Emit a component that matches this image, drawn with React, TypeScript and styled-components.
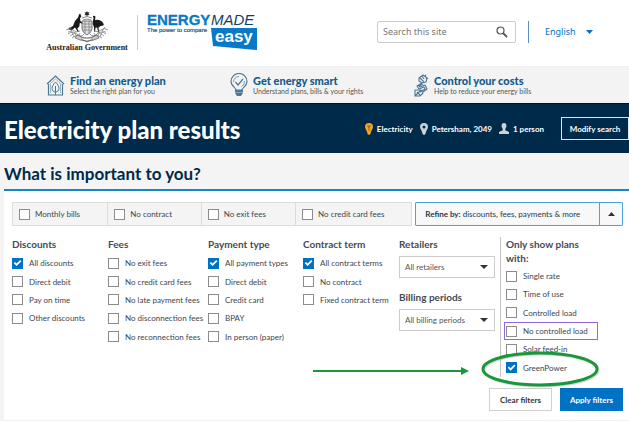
import React from "react";
import styled, { createGlobalStyle, css } from "styled-components";

const navy = "#002a4a";
const blue = "#0072c6";
const ink = "#3c4650";

const GlobalStyle = createGlobalStyle`
  * { box-sizing: border-box; }
  body {
    margin: 0;
    background: #fff;
    color: ${ink};
    font: 8px/12px Lato, "Open Sans", sans-serif;
  }
  h1, h2, h3, p, ul { margin: 0; padding: 0; }
  ul { list-style: none; }
  button, input, select { font: inherit; color: inherit; margin: 0; }
  svg { display: block; flex: none; }
`;

const Header = styled.header`
  display: flex;
  align-items: center;
  height: 67px;
  padding: 0 35px 2px 46px;
  border-bottom: 1px solid #f0f0f0;
`;

const Brands = styled.div`
  display: flex;
  align-items: center;
  gap: 9px;
  flex: 1;
`;

const Government = styled.div`
  width: 82px;
  display: flex;
  flex-direction: column;
  align-items: center;
  color: #222;
  font: bold 8px/10px "Liberation Serif", serif;
  white-space: nowrap;
`;

const Rule = styled.span<{ $blue?: boolean }>`
  width: 1px;
  height: ${(p) => (p.$blue ? 22 : 35)}px;
  background: ${(p) => (p.$blue ? "#5b92c4" : "#ccc")};
`;

const Tools = styled.div`
  display: flex;
  align-items: center;
  gap: 12px;
`;

const SearchBox = styled.form`
  display: flex;
  align-items: center;
  width: 139px;
  height: 22px;
  padding: 0 7px 0 5px;
  border: 1px solid #ccc;
  border-radius: 2px;
`;

const SearchInput = styled.input`
  flex: 1;
  min-width: 0;
  border: 0;
  padding: 0;
  outline: 0;
  background: none;
  font: 9px/14px "Noto Sans", sans-serif;
  &::placeholder { color: #777; opacity: 1; }
`;

const IconButton = styled.button`
  border: 0;
  padding: 0;
  background: none;
`;

const Picker = styled.div<{ $plain?: boolean }>`
  display: flex;
  align-items: center;
  position: relative;
  ${(p) =>
    p.$plain
      ? css`
          width: 49px;
          margin-left: 4px;
          color: ${blue};
          font: 9px/14px "Noto Sans", sans-serif;
        `
      : css`
          width: 96px;
          height: 22px;
          border: 1px solid #ccc;
          background: #fff;
          color: #555;
        `}
  select {
    appearance: none;
    width: 100%;
    height: 100%;
    border: 0;
    outline: 0;
    background: none;
    padding: 0 0 0 ${(p) => (p.$plain ? 0 : 5)}px;
  }
  svg {
    position: absolute;
    right: ${(p) => (p.$plain ? 1 : 6)}px;
    pointer-events: none;
  }
`;

const Nav = styled.nav`
  display: grid;
  grid-template-columns: 184fr 184fr 215fr;
  height: 36px;
  padding-left: 46px;
  background: #f3f3f3;
`;

const NavItem = styled.a`
  display: flex;
  align-items: center;
  gap: 5px;
  color: #555;
  font-size: 7px;
  line-height: 9px;
  text-decoration: none;
  white-space: nowrap;
  strong {
    display: block;
    color: #125a8c;
    font-size: 11px;
    font-weight: 900;
    line-height: 13px;
  }
`;

const Hero = styled.section`
  display: flex;
  align-items: center;
  justify-content: space-between;
  height: 50px;
  padding: 0 0 0 4px;
  border-top: 1px solid #001226;
  background: ${navy};
  color: #fff;
`;

const PageTitle = styled.h1`
  padding-top: 2px;
  font-size: 24px;
  line-height: 32px;
  font-weight: 900;
  white-space: nowrap;
`;

const Facts = styled.div`
  display: flex;
  align-items: center;
  gap: 7px;
  font-weight: 700;
  white-space: nowrap;
`;

const Fact = styled.span`
  display: flex;
  align-items: center;
  gap: 4px;
`;

const ModifyButton = styled.button`
  width: 68px;
  height: 23px;
  margin-left: 10px;
  padding: 0;
  border: 1px solid #dfe6ec;
  background: none;
  font-weight: 700;
  white-space: nowrap;
`;

const Results = styled.main`
  padding-left: 4px;
  background: #f4f4f4;
`;

const SectionTitle = styled.h2`
  padding: 7px 0 2px;
  border-bottom: 2px solid #1787c9;
  color: ${navy};
  font-size: 17px;
  line-height: 27px;
  font-weight: 700;
`;

const Panel = styled.div`
  padding: 11px 6px 9px 8px;
  background: #fff;
  border-bottom: 1px solid #eee;
`;

const QuickBar = styled.div`
  display: grid;
  grid-template-columns: 401fr 208fr;
  gap: 3px;
`;

const QuickFilters = styled.div`
  display: grid;
  grid-template-columns: 95fr 94fr 95fr 117fr;
  height: 24px;
  border: 1px solid #dcdcdc;
  background: #f4f4f4;
  > label + label { border-left: 1px solid #dcdcdc; }
  > label { padding-left: 6px; gap: 5px; }
`;

const Refine = styled.button`
  display: grid;
  grid-template-columns: 1fr 23px;
  align-items: center;
  height: 24px;
  padding: 0;
  border: 1px solid #4ba3dc;
  border-radius: 1px;
  background: #f8f8f8;
  color: #26384c;
  text-align: left;
  white-space: nowrap;
  > span { padding-left: 9px; }
  > i {
    display: grid;
    place-items: center;
    height: 22px;
    border-left: 1px solid #4ba3dc;
  }
`;

const Check = styled.label<{ $outlined?: boolean }>`
  display: flex;
  align-items: center;
  gap: 6px;
  white-space: nowrap;
  ${(p) =>
    p.$outlined &&
    css`
      width: 94px;
      margin-left: -2px;
      padding-left: 1px;
      border: 1px solid #9468dc;
    `}
  input {
    appearance: none;
    flex: none;
    width: 11px;
    height: 11px;
    border: 1px solid #8c8c8c;
    background: #fff;
  }
  input:checked {
    border-color: ${blue};
    background: ${blue};
  }
  input:checked::before {
    content: "";
    display: block;
    width: 9px;
    height: 9px;
    background: #fff;
    clip-path: polygon(8% 50%, 22% 36%, 40% 54%, 80% 14%, 94% 28%, 40% 82%);
  }
`;

const Filters = styled.div`
  display: grid;
  grid-template-columns: 96fr 100fr 95fr 96fr 101fr 123fr;
  margin-top: 11px;
`;

const Group = styled.section<{ $divided?: boolean }>`
  ${(p) =>
    p.$divided &&
    css`
      padding-left: 5px;
      border-left: 1px solid #c4c4c4;
    `}
`;

const GroupTitle = styled.h3`
  font-size: 10px;
  line-height: 14px;
  font-weight: 700;
  color: #444b53;
`;

const Options = styled.ul<{ $rows: number }>`
  display: grid;
  grid-template-rows: repeat(${(p) => p.$rows}, 1fr);
  height: ${(p) => (p.$rows === 6 ? 110 : 92)}px;
  margin-top: ${(p) => (p.$rows === 6 ? 2 : 3)}px;
  li { position: relative; display: flex; align-items: center; }
  li > label { height: 18px; }
`;

const Field = styled.div`
  display: grid;
  gap: 5px;
  margin-bottom: 12px;
`;

const Callout = styled.svg`
  position: absolute;
  left: -196px;
  top: -12px;
  pointer-events: none;
`;

const Actions = styled.div`
  display: flex;
  justify-content: flex-end;
  gap: 8px;
  margin-top: 11px;
`;

const ActionButton = styled.button<{ $primary?: boolean }>`
  width: 63px;
  height: 23px;
  padding: 0;
  border: 1px solid ${(p) => (p.$primary ? blue : "#d0d0d0")};
  background: ${(p) => (p.$primary ? blue : "#fff")};
  color: ${(p) => (p.$primary ? "#fff" : "#333")};
  font-weight: 700;
  white-space: nowrap;
`;

const Caret = ({ up = false, fill = "#333", w = 8 }) => (
  <svg width={w} height="4" viewBox="0 0 8 4" preserveAspectRatio="none" aria-hidden="true">
    <path d={up ? "M0 4 4 0l4 4z" : "M0 0h8L4 4z"} fill={fill} />
  </svg>
);

const Crest = () => (
  <svg width="44" height="32" viewBox="0 0 44 32" aria-hidden="true" fill="none" stroke="#666" strokeWidth=".7">
    <path d="m22 0 .8 1.6 1.8-.3-1 1.5 1 1.5-1.8-.3L22 5.500l-.8-1.500-1.800.3 1-1.500-1-1.500 1.800.3z" fill="#222" stroke="none" />
    <path d="M17 7q5-3 10 0M18 9q4-2 8 0" stroke="#555" />
    <path d="M17 10h10v8q-1 4-5 6-4-2-5-6z" fill="#ddd" stroke="#444" />
    <path d="M17 16h10M20 10v12m4-12v12M18 13h8M18 19h8" stroke="#777" />
    <path d="M14 3.500l1.200-1 .8 2 .3 1.500-1.300 1 .4 3 2.100 2-.4.8-2.300-1-.5 3.700-2 2 1.500 3-.8.4-3-4.400-3.500 3L3 18l5-3 2-5 3-3.500z" fill="#1a1a1a" stroke="none" />
    <path d="M28 5q2-1 2.500 1L30 9q4-1 7 1.500 2 2 1.500 4l-3 .5-2 1.500.6 5h-.9l-1-5-1.700.2-.5 4h-.8l-.2-4.700q-2-3-1-6.500l.8-3L28 6.500z" fill="#1a1a1a" stroke="none" />
    <path d="M1 19q4-3 7 0t7 1M43 19q-4-3-7 0t-7 1M3 23q5-4 9 0t7 0M41 23q-5-4-9 0t-7 0M7 27q5-4 10-1M37 27q-5-4-10-1" />
    <path d="M4 16l3 4-4 1m4 0 2 5m-4-1 5-3 2 5 3-5m25-6-3 4 4 1m-4 0-2 5m4-1-5-3-2 5-3-5" stroke="#777" />
    <path d="M12 24q10 6 20 0l2 3q-12 6-24 0zM16 28l6 3 6-3" fill="#ccc" stroke="#555" />
  </svg>
);

const EnergyLogo = () => (
  <svg width="111" height="42" viewBox="0 0 111 42" role="img" aria-label="Energy Made Easy" fontFamily="Liberation Sans, Arial, sans-serif">
    <text x="0" y="14" fontSize="15" fontWeight="700" fill="#0878c8" stroke="#0878c8" strokeWidth=".3">ENERGY</text>
    <text x="64" y="14" fontSize="15" fontStyle="italic" fill="#123e68">MADE</text>
    <text x="0" y="21" fontSize="6" fill="#1f5686" stroke="#1f5686" strokeWidth=".2">The power to compare</text>
    <path d="M64 17h46v22l-44-4z" fill="#0878c8" />
    <text x="68" y="31" fontSize="17" fontWeight="700" fill="#fff">easy</text>
  </svg>
);

const HouseIcon = () => (
  <svg width="19" height="21" viewBox="0 0 19 21" fill="none" stroke="#4e7795" strokeWidth="1.200" aria-hidden="true">
    <path d="M2.500 9v11h14V9M1 9l8.500-8L18 9" />
    <path d="M4.500 18V8.500l5-4.500 5 4.500V18" strokeWidth=".5" />
    <path d="M9.500 7C7.500 9 6 11.500 6 13.500s1.500 3.500 3.500 3.500 3.500-1.500 3.500-3.500S11.500 9 9.500 7zM9.500 11v9" strokeWidth="1" />
  </svg>
);

const BulbIcon = () => (
  <svg width="18" height="24" viewBox="0 0 18 24" fill="none" stroke="#4e7795" strokeWidth="1.200" aria-hidden="true">
    <path d="M6 17c0-2-5-4-5-8.500a8 8 0 0 1 16 0C17 13 12 15 12 17z" />
    <path d="M3.500 9A5.500 5.500 0 0 1 9 3.500M14.500 8a5.500 5.500 0 0 1-3 5.500" strokeWidth=".7" />
    <path d="m5.500 9 2.500 3 5-6" />
    <path d="M5 17h8v3l-2 3H7l-2-3z" fill="#4e7795" stroke="none" />
    <path d="M5 19.500h8" stroke="#b9c8d3" strokeWidth=".6" />
  </svg>
);

const PlugIcon = () => (
  <svg width="15" height="23" viewBox="0 0 15 23" fill="none" stroke="#4e7795" strokeWidth="1.100" strokeLinejoin="round" aria-hidden="true">
    <path d="m5 4 4-3 4 3-1 4-4 1-3-2zM8 2l2 3M11 2l1-1M12 5l2-1M6 4l4 4" />
    <path d="m8 9-5 3 2 3 5-2 1 2-5 3M9 10l-4 2 1 1 5-2 2 4-4 3" />
    <path d="M1 16h6l2 3-3 3H1zM1 22l6-6M3 18l3 3" />
  </svg>
);

const Pin = ({ color }: { color: string }) => (
  <svg width="8" height="12" viewBox="0 0 8 12" aria-hidden="true">
    <path d="M4 0a4 4 0 0 1 4 4c0 2-2.500 4-2.500 7L4 12l-1.500-1C2.500 8 0 6 0 4a4 4 0 0 1 4-4z" fill={color} />
    {color === "#f5a623" ? (
      <path d="M3 2v2h2V2M4 4v4" stroke="#7b5a23" strokeWidth=".8" fill="none" />
    ) : (
      <circle cx="4" cy="4" r="1.500" fill={navy} />
    )}
  </svg>
);

const Person = () => (
  <svg width="10" height="11" viewBox="0 0 10 11" fill="#ccd2d8" aria-hidden="true">
    <path d="M5 0c2 0 2.600 1.500 2.400 3.200C7.200 4.800 6.500 5.400 6.300 6v1.200L10 9v2H0V9l3.700-1.800V6c-.2-.6-.9-1.200-1.100-2.800C2.400 1.500 3 0 5 0z" />
  </svg>
);

const Option = ({ label, checked, outlined }: { label: string; checked?: boolean; outlined?: boolean }) => (
  <Check $outlined={outlined}>
    <input type="checkbox" defaultChecked={checked} />
    {label}
  </Check>
);

const navItems = [
  { title: "Find an energy plan", note: "Select the right plan for you", icon: <HouseIcon /> },
  { title: "Get energy smart", note: "Understand plans, bills & your rights", icon: <BulbIcon /> },
  { title: "Control your costs", note: "Help to reduce your energy bills", icon: <PlugIcon /> },
];

const groups = [
  { title: "Discounts", items: ["All discounts", "Direct debit", "Pay on time", "Other discounts"] },
  { title: "Fees", items: ["No exit fees", "No credit card fees", "No late payment fees", "No disconnection fees", "No reconnection fees"] },
  { title: "Payment type", items: ["All payment types", "Direct debit", "Credit card", "BPAY", "In person (paper)"] },
  { title: "Contract term", items: ["All contract terms", "No contract", "Fixed contract term"] },
];

const planKinds = ["Single rate", "Time of use", "Controlled load", "No controlled load", "Solar feed-in", "GreenPower"];

export default function App() {
  return (
    <>
      <GlobalStyle />
      <Header>
        <Brands>
          <Government>
            <Crest />
            Australian Government
          </Government>
          <Rule />
          <EnergyLogo />
        </Brands>
        <Tools>
          <SearchBox onSubmit={(e) => e.preventDefault()}>
            <SearchInput aria-label="Search this site" placeholder="Search this site" />
            <IconButton aria-label="Search">
              <svg width="12" height="12" viewBox="0 0 12 12" fill="none" stroke="#555">
                <circle cx="4.500" cy="4.500" r="3.500" strokeWidth="1.200" />
                <path d="m7 7 4 4" strokeWidth="1.800" />
              </svg>
            </IconButton>
          </SearchBox>
          <Rule $blue />
          <Picker $plain>
            <select aria-label="Language">
              <option>English</option>
            </select>
            <Caret fill={blue} w={7} />
          </Picker>
        </Tools>
      </Header>
      <Nav>
        {navItems.map((n) => (
          <NavItem href="#" key={n.title}>
            {n.icon}
            <span>
              <strong>{n.title}</strong>
              {n.note}
            </span>
          </NavItem>
        ))}
      </Nav>
      <Hero>
        <PageTitle>Electricity plan results</PageTitle>
        <Facts>
          <Fact><Pin color="#f5a623" />Electricity</Fact>
          <Fact><Pin color="#ccd2d8" />Petersham, 2049</Fact>
          <Fact><Person />1 person</Fact>
          <ModifyButton>Modify search</ModifyButton>
        </Facts>
      </Hero>
      <Results>
        <SectionTitle>What is important to you?</SectionTitle>
        <Panel>
          <QuickBar>
            <QuickFilters>
              {["Monthly bills", "No contract", "No exit fees", "No credit card fees"].map((l) => (
                <Option key={l} label={l} />
              ))}
            </QuickFilters>
            <Refine aria-expanded="true">
              <span><b>Refine by:</b> discounts, fees, payments &amp; more</span>
              <i><Caret up w={7} /></i>
            </Refine>
          </QuickBar>
          <Filters>
            {groups.map((g) => (
              <Group key={g.title}>
                <GroupTitle>{g.title}</GroupTitle>
                <Options $rows={5}>
                  {g.items.map((l) => (
                    <li key={l}><Option label={l} checked={l.startsWith("All")} /></li>
                  ))}
                </Options>
              </Group>
            ))}
            <Group>
              {[["Retailers", "All retailers"], ["Billing periods", "All billing periods"]].map(([t, v]) => (
                <Field key={t}>
                  <GroupTitle as="label" htmlFor={t}>{t}</GroupTitle>
                  <Picker>
                    <select id={t}><option>{v}</option></select>
                    <Caret />
                  </Picker>
                </Field>
              ))}
            </Group>
            <Group $divided>
              <GroupTitle>Only show plans<br />with:</GroupTitle>
              <Options $rows={6}>
                {planKinds.map((l) => (
                  <li key={l}>
                    <Option label={l} checked={l === "GreenPower"} outlined={l === "No controlled load"} />
                    {l === "GreenPower" && (
                      <Callout width="292" height="44" viewBox="0 0 292 44" fill="none" stroke="#17983b" aria-hidden="true">
                        <ellipse cx="231" cy="23" rx="57" ry="16" stroke="#999" strokeOpacity=".4" strokeWidth="3" />
                        <ellipse cx="230" cy="22" rx="57" ry="16" strokeWidth="3" />
                        <path d="M3 24h150" strokeWidth="2" />
                        <path d="m151 20 8 4-8 4z" fill="#17983b" stroke="none" />
                      </Callout>
                    )}
                  </li>
                ))}
              </Options>
            </Group>
          </Filters>
          <Actions>
            <ActionButton>Clear filters</ActionButton>
            <ActionButton $primary>Apply filters</ActionButton>
          </Actions>
        </Panel>
      </Results>
    </>
  );
}
